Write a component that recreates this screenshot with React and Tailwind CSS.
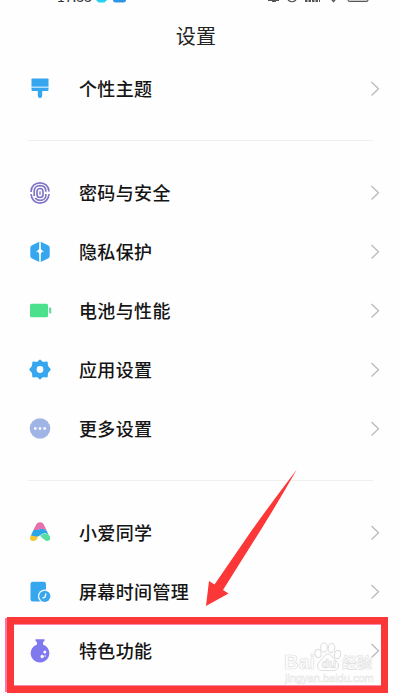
const ThemeIcon = () => (
    <svg className="w-6 h-6" viewBox="0 0 24 24">
        <path d="M3.500 2.300q0-.8.8-.8h15.400q.8 0 .8.800v7.500h-17z" fill="#36a6ef" />
        <path d="M3.500 11h17v1.700q0 1.300-1.300 1.300h-5v4.800q0 2.200-2.200 2.200t-2.200-2.200V14h-5q-1.300 0-1.300-1.300z" fill="#36a6ef" />
        <path d="M3.500 9.800h17V11h-17z" fill="#aedcfa" />
    </svg>
);

const SecurityIcon = () => (
    <svg className="w-6 h-6" viewBox="0 0 24 24" fill="none" stroke="#8176c6" strokeWidth="1.700">
        <path d="M3.100 11V10.500C3.100 5.300 7 1.800 12 1.800s8.900 3.500 8.900 8.700M21 13c-.3 5.500-4 9.200-9 9.200S3.300 18.500 3.100 13" />
        <path d="M6.200 15V10c0-3.300 2.300-5.300 5.800-5.300s5.800 2 5.800 5.300v.8M17.800 13v1.500c0 2.800-2.300 4.800-5.800 4.800-2.100 0-3.800-.8-4.800-2.200" />
        <rect x="9" y="7.500" width="6" height="9" rx="3" />
        <path d="M12 10.300v3.400" strokeWidth="1.400" />
    </svg>
);

const PrivacyIcon = () => (
    <svg className="w-6 h-6" viewBox="0 0 24 24">
        <path d="M11.200 1.700v20.400L4 18.500q-1.700-.9-1.700-2.600V7.800q0-1.700 1.700-2.600zM12.800 1.700v20.400l7.200-3.600q1.700-.9 1.700-2.600V7.800q0-1.700-1.700-2.600z" fill="#36a6ef" />
        <path d="M12 6.500q.6 4 4.200 4.700-3.600.7-4.200 4.700-.6-4-4.200-4.700 3.600-.7 4.200-4.700z" fill="#fff" />
    </svg>
);

const BatteryIcon = () => (
    <svg className="w-6 h-6" viewBox="0 0 24 24" fill="#4be08c">
        <rect x="2" y="4.800" width="18" height="13.400" rx="1.500" />
        <rect x="21.200" y="8.500" width="2" height="6" rx=".8" />
    </svg>
);

const AppsIcon = () => (
    <svg className="w-6 h-6" viewBox="0 0 24 24">
        <path
            d="M12 2.300l2.700 2.500 4.200-.5.400 4 2.700 3.200-2.700 3.200-.4 4-4.200-.5-2.700 2.500-2.700-2.500-4.200.5-.4-4L2 11.500l2.700-3.200.4-4 4.200.5z"
            fill="#36a6ef"
            stroke="#36a6ef"
            strokeWidth="1.500"
            strokeLinejoin="round"
        />
        <circle cx="12" cy="11.500" r="3.400" fill="#fff" />
    </svg>
);

const MoreIcon = () => (
    <svg className="w-6 h-6" viewBox="0 0 24 24">
        <circle cx="12" cy="11.500" r="10.300" fill="#a0b4e6" />
        <g fill="#fff">
            <rect x="6" y="10.200" width="2.600" height="2.600" rx=".8" />
            <rect x="10.700" y="10.200" width="2.600" height="2.600" rx=".8" />
            <rect x="15.400" y="10.200" width="2.600" height="2.600" rx=".8" />
        </g>
    </svg>
);

const AssistantIcon = () => (
    <svg className="w-6 h-6" viewBox="0 0 24 24">
        <path d="M8.200 3.500Q9.300 1.300 12 1.300t3.800 2.200l3 6.500q-5-3.300-7-1.800T5.500 9z" fill="#e66fae" />
        <path d="M5.600 8.800q4.400.8 6.700-.8 2.300-1.300 6.500 2l1.700 3.500q-4.500-2.500-8 .5-4 3.700-9.700.5z" fill="#2ba5e8" />
        <path d="M12 14.800q5-3.700 8.500-1.300 2.500 2.500 1.500 4.700-1.200 2.300-4 1.500-3.200-1.500-6-4.900z" fill="#58dfa0" />
        <path d="M2.800 14.500q4.200.7 7.200 1.300-1 4.200-5 4.200-3.500-.3-3-3.500z" fill="#f5c832" />
    </svg>
);

const ScreenTimeIcon = () => (
    <svg className="w-6 h-6" viewBox="0 0 24 24">
        <rect x="2.500" y="1.800" width="15.500" height="19.700" rx="2.300" fill="#36a6ef" />
        <circle cx="16.800" cy="16.300" r="6.800" fill="#fff" />
        <circle cx="16.800" cy="16.300" r="5.600" fill="#36a6ef" />
        <path d="M18 13.500l-1 3.700-2.500 1" fill="none" stroke="#fff" strokeWidth="1.300" />
    </svg>
);

const FlaskIcon = () => (
    <svg className="w-6 h-6" viewBox="0 0 24 24">
        <path d="M7.700 .3h8.800v1.800q-1.500.6-1.500 2v1.400a9.300 9.300 0 1 1-6 0V4.100q0-1.400-1.500-2V.3z" fill="#7f78ef" />
        <circle cx="16.800" cy="13" r="1.500" fill="#fff" />
        <circle cx="14.200" cy="17.500" r="1.700" fill="#fff" />
        <circle cx="17.200" cy="17" r=".7" fill="#fff" />
    </svg>
);

const groups = [
    [{ label: '个性主题', icon: ThemeIcon }],
    [
        { label: '密码与安全', icon: SecurityIcon },
        { label: '隐私保护', icon: PrivacyIcon },
        { label: '电池与性能', icon: BatteryIcon },
        { label: '应用设置', icon: AppsIcon },
        { label: '更多设置', icon: MoreIcon },
    ],
    [
        { label: '小爱同学', icon: AssistantIcon },
        { label: '屏幕时间管理', icon: ScreenTimeIcon },
        { label: '特色功能', icon: FlaskIcon },
    ],
];

const StatusBar = () => (
    <div className="h-[6px] pl-[57px] pr-[31px] flex justify-between items-start overflow-hidden">
        <div className="flex items-start">
            {/* scrolled half out of view, only the feet of the digits show */}
            <span className="w-[39px] h-[14px] -mt-[11px] text-[14px] leading-[14px] text-[#333]">17:33</span>
            <svg className="w-[31px] h-[3px]" viewBox="0 0 31 3">
                <path d="M0 0h11L8.500 2.500h-6z" fill="#26d0ef" />
                <path d="M17 0h13q0 2.500-3 2.500h-7q-3 0-3-2.500z" fill="#2f96e6" />
            </svg>
        </div>
        <svg className="w-[103px] h-[3px]" viewBox="0 0 103 3" fill="none" stroke="#555">
            <path d="M1 .5h11M5 1.500h4M21 0q4 3.500 8 0" strokeWidth="1.200" />
            <path d="M38 1h15" strokeWidth="2" strokeDasharray="2.500 1" />
            <path d="M65 0l1.500 1.500L68 0" strokeWidth="1.500" />
            <path d="M81 0q0 1.500 2 1.500h16q2 0 2-1.500" fill="#ccc" strokeWidth="1.200" />
        </svg>
    </div>
);

const Row = ({ label, icon: Icon }) => (
    <div className="h-[59px] pl-7 pr-[21px] flex items-center">
        <Icon />
        <span className="ml-[27px] -mt-0.5 flex-1 text-[18px] leading-6 font-medium tracking-[0.35px] text-[#151515]">{label}</span>
        <svg className="w-[10px] h-4" viewBox="0 0 10 16" fill="none" stroke="#bababa" strokeWidth="1.300">
            <path d="M1.500 1l7 6.800-7 6.700" />
        </svg>
    </div>
);

const Watermark = () => (
    <div className="absolute left-[284px] top-[641px] w-[94px] h-[46px] text-white">
        <div className="flex items-end h-[31px]">
            <span className="w-[30px] text-[20px] leading-5 font-bold font-['Liberation_Sans'] [-webkit-text-stroke:0.7px_#dedede]">Bai</span>
            <svg className="w-7 h-[30px]" viewBox="0 0 28 30" fill="#fff" stroke="#dcdcdc">
                <ellipse cx="4" cy="11.500" rx="3" ry="4.200" transform="rotate(-12 4 11.500)" />
                <ellipse cx="10" cy="5.500" rx="3.300" ry="4.500" />
                <ellipse cx="17.500" cy="6" rx="3.300" ry="4.500" transform="rotate(10 17.500 6)" />
                <ellipse cx="23.500" cy="12.500" rx="3" ry="4.200" transform="rotate(12 23.500 12.500)" />
                <path d="M14 12c3 0 4 3 7 6s4.500 5 3 8-5 2.500-10 2.500-9 .5-10-2.500 0-5 3-8 4-6 7-6z" />
                <text x="7.500" y="25.500" fontSize="12" fontWeight="bold" fontFamily="Liberation Sans" strokeWidth=".7">du</text>
            </svg>
            <span className="text-[15px] leading-5 font-bold [-webkit-text-stroke:0.6px_#dedede]">经验</span>
        </div>
        <div className="ml-px text-[11px] leading-3 font-['Liberation_Sans'] text-[#fafafa] [-webkit-text-stroke:0.5px_#e6e6e6]">
            jingyan.baidu.com
        </div>
    </div>
);

export default function App() {
    return (
        <div className="relative w-full h-[696px] overflow-hidden bg-[#fefefe] font-['Noto_Sans_CJK_SC',sans-serif]">
            <StatusBar />
            <h1 className="h-[53px] pt-4 pr-[9px] text-center text-[20px] leading-7 tracking-[0.2px] text-[#222]">设置</h1>
            {groups.map((rows, i) => (
                <section key={i}>
                    {i > 0 && <div className="my-[22px] ml-7 mr-7 h-px bg-[#efefef]" />}
                    {rows.map((row) => (
                        <Row key={row.label} {...row} />
                    ))}
                </section>
            ))}

            <Watermark />

            {/* highlighted entry */}
            <div className="absolute left-[5px] top-[618px] w-1 h-[74px] bg-[#fa75a8]" />
            <div className="absolute left-[7px] top-[617px] w-[381px] h-[76px] border-[7px] border-[#fc3737]">
                <div className="h-full border-y border-[#fa85ad]" />
            </div>
            <svg className="absolute left-[200px] top-[465px] w-[100px] h-[145px]" viewBox="0 0 100 145">
                <path d="M96.800 4.500Q72 37 52 65L14.500 119.500 9 116 6 141l22.500-12.500-5.500-3.500L62 63Q80 34 96.800 4.500z" fill="#fc3737" />
            </svg>
        </div>
    );
}
